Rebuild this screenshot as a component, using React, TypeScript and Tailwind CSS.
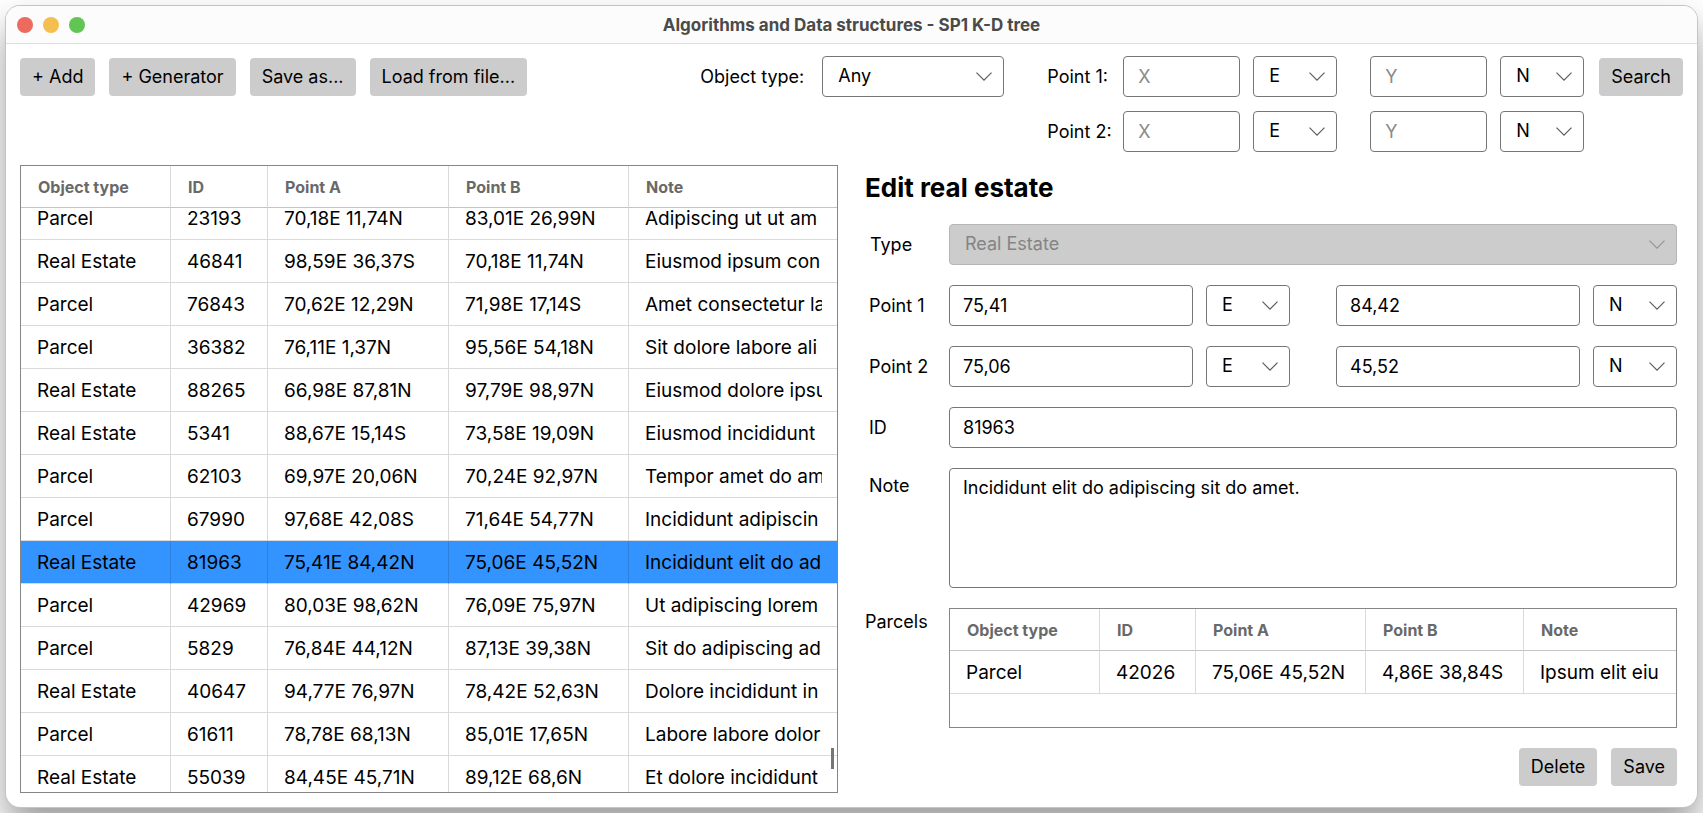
import { useLayoutEffect, useRef } from "react";
import type { ReactNode } from "react";

type Row = [type: string, id: string, a: string, b: string, note: string];

const ROWS: Row[] = [
  ["Parcel", "23193", "70,18E 11,74N", "83,01E 26,99N", "Adipiscing ut ut am"],
  ["Real Estate", "46841", "98,59E 36,37S", "70,18E 11,74N", "Eiusmod ipsum con"],
  ["Parcel", "76843", "70,62E 12,29N", "71,98E 17,14S", "Amet consectetur la"],
  ["Parcel", "36382", "76,11E 1,37N", "95,56E 54,18N", "Sit dolore labore ali"],
  ["Real Estate", "88265", "66,98E 87,81N", "97,79E 98,97N", "Eiusmod dolore ipsu"],
  ["Real Estate", "5341", "88,67E 15,14S", "73,58E 19,09N", "Eiusmod incididunt"],
  ["Parcel", "62103", "69,97E 20,06N", "70,24E 92,97N", "Tempor amet do am"],
  ["Parcel", "67990", "97,68E 42,08S", "71,64E 54,77N", "Incididunt adipiscin"],
  ["Real Estate", "81963", "75,41E 84,42N", "75,06E 45,52N", "Incididunt elit do ad"],
  ["Parcel", "42969", "80,03E 98,62N", "76,09E 75,97N", "Ut adipiscing lorem"],
  ["Parcel", "5829", "76,84E 44,12N", "87,13E 39,38N", "Sit do adipiscing ad"],
  ["Real Estate", "40647", "94,77E 76,97N", "78,42E 52,63N", "Dolore incididunt in"],
  ["Parcel", "61611", "78,78E 68,13N", "85,01E 17,65N", "Labore labore dolor"],
  ["Real Estate", "55039", "84,45E 45,71N", "89,12E 68,6N", "Et dolore incididunt"],
];

const PARCELS: Row[] = [["Parcel", "42026", "75,06E 45,52N", "4,86E 38,84S", "Ipsum elit eiu"]];

const HEADERS = ["Object type", "ID", "Point A", "Point B", "Note"];

function Button({ children }: { children: ReactNode }) {
  return (
    <button type="button" className="h-[38px] shrink-0 rounded-[4px] bg-[#cccccc] px-3 pb-px text-lg whitespace-nowrap">
      {children}
    </button>
  );
}

function Select({ label, id, value, options, disabled, className }: {
  label?: string;
  id?: string;
  value: string;
  options: string[];
  disabled?: boolean;
  className: string;
}) {
  return (
    <div className={`grid items-center ${className}`}>
      <select
        id={id}
        aria-label={label}
        defaultValue={value}
        disabled={disabled}
        className="col-start-1 row-start-1 h-[41px] w-full appearance-none rounded-[4px] border border-[#767676] bg-white pr-8 pb-[2px] pl-[15px] text-lg leading-6 text-black opacity-100 disabled:border-[#b5b5b5] disabled:bg-[#cccccc] disabled:text-[#848484]"
      >
        {options.map((o) => (
          <option key={o}>{o}</option>
        ))}
      </select>
      <svg
        viewBox="0 0 16 9"
        className={`pointer-events-none col-start-1 row-start-1 mr-3 h-[9px] w-4 justify-self-end fill-none ${disabled ? "stroke-[#949494]" : "stroke-[#5c5c5c]"}`}
        strokeWidth="1.2"
        aria-hidden="true"
      >
        <path d="M0.5 0.6L8 8.1L15.5 0.6" />
      </svg>
    </div>
  );
}

function Field({ label, id, value, placeholder, className }: {
  label?: string;
  id?: string;
  value?: string;
  placeholder?: string;
  className: string;
}) {
  return (
    <input
      type="text"
      id={id}
      aria-label={label}
      defaultValue={value}
      placeholder={placeholder}
      className={`h-[41px] min-w-0 rounded-[4px] border border-[#767676] bg-white pb-px text-lg leading-6 placeholder:text-[#8a8a8a] ${className}`}
    />
  );
}

function DataTable({ rows, widths, selected, offset = 0 }: {
  rows: Row[];
  widths: string[];
  selected?: string;
  offset?: number;
}) {
  const ref = useRef<HTMLDivElement>(null);
  useLayoutEffect(() => {
    if (ref.current) ref.current.scrollTop = offset;
  }, [offset]);
  return (
    <div ref={ref} className="h-full overflow-y-auto border border-[#868686] [scrollbar-width:none]">
      <table className="w-full table-fixed border-separate border-spacing-0 text-left">
        <colgroup>
          {widths.map((w, i) => (
            <col key={i} className={w} />
          ))}
        </colgroup>
        <thead>
          <tr>
            {HEADERS.map((h) => (
              <th
                key={h}
                className="sticky top-0 h-[42px] border-r border-b border-r-[#dadada] border-b-[#c4c4c4] bg-white px-[17px] text-base leading-5 font-bold text-[#696969] last:border-r-0"
              >
                {h}
              </th>
            ))}
          </tr>
        </thead>
        <tbody>
          {rows.map((r) => (
            <tr key={r[1]} aria-selected={r[1] === selected} className="group aria-selected:bg-[#3393ff]">
              {r.map((c, i) => (
                <td
                  key={i}
                  className="h-[43px] border-r border-b border-[#dadada] pt-px pr-[15px] pl-4 text-[19px] leading-6 group-aria-selected:border-r-[#2d80dd] last:border-r-0"
                >
                  <div className="overflow-hidden whitespace-nowrap">{c}</div>
                </td>
              ))}
            </tr>
          ))}
        </tbody>
      </table>
    </div>
  );
}

function SearchPoint({ n }: { n: number }) {
  return (
    <div className="flex items-center">
      <label htmlFor={`search-x${n}`} className="w-[76px] text-lg leading-6">Point {n}:</label>
      <Field id={`search-x${n}`} placeholder="X" className="w-[117px] px-[14px]" />
      <Select label={`Point ${n} longitude`} value="E" options={["E", "W"]} className="ml-[13px] w-[84px]" />
      <Field label={`Point ${n} Y`} placeholder="Y" className="ml-[33px] w-[117px] px-[14px]" />
      <Select label={`Point ${n} latitude`} value="N" options={["N", "S"]} className="ml-[13px] w-[84px]" />
    </div>
  );
}

function EditPoint({ n, x, y }: { n: number; x: string; y: string }) {
  return (
    <>
      <label htmlFor={`edit-x${n}`} className="self-center pl-1">Point {n}</label>
      <div className="flex">
        <Field id={`edit-x${n}`} value={x} className="flex-1 px-[13px]" />
        <Select label={`Point ${n} east or west`} value="E" options={["E", "W"]} className="ml-[13px] w-[84px]" />
        <Field label={`Point ${n} second coordinate`} value={y} className="ml-[46px] flex-1 px-[13px]" />
        <Select label={`Point ${n} north or south`} value="N" options={["N", "S"]} className="ml-[13px] w-[84px]" />
      </div>
    </>
  );
}

export default function App() {
  return (
    <div className="flex h-screen overflow-hidden bg-white p-[6px] font-['Inter',sans-serif] text-black">
      <div className="flex min-w-0 flex-1 flex-col overflow-hidden rounded-[14px] bg-white shadow-[0_0_0_1px_#c4c4c4,0_20px_36px_rgba(0,0,0,0.4)]">
        <header className="grid h-[38px] shrink-0 grid-cols-[1fr_auto_1fr] items-center border-b border-[#dedede] bg-[#fcfcfc]">
          <div className="flex gap-[10px] pl-[11px]">
            <button type="button" aria-label="Close" className="size-4 rounded-full bg-[#ec6a5e]" />
            <button type="button" aria-label="Minimize" className="size-4 rounded-full bg-[#f4bf4f]" />
            <button type="button" aria-label="Zoom" className="size-4 rounded-full bg-[#61c554]" />
          </div>
          <h1 className="text-[17px] leading-6 font-bold text-[#4a4a4a]">Algorithms and Data structures - SP1 K-D tree</h1>
        </header>

        <div className="flex shrink-0 items-start px-[14px] pt-3">
          <div className="flex gap-[14px] pt-[2px]">
            <Button>+ Add</Button>
            <Button>+ Generator</Button>
            <Button>Save as...</Button>
            <Button>Load from file...</Button>
          </div>
          <div className="ml-auto flex items-start">
            <div className="flex items-center gap-[18px]">
              <label htmlFor="search-type" className="text-lg leading-6">Object type:</label>
              <Select id="search-type" value="Any" options={["Any", "Parcel", "Real Estate"]} className="w-[182px]" />
            </div>
            <div className="ml-[43px] flex flex-col gap-[14px]">
              <SearchPoint n={1} />
              <SearchPoint n={2} />
            </div>
            <div className="ml-[15px] pt-[2px]">
              <Button>Search</Button>
            </div>
          </div>
        </div>

        <main className="grid min-h-0 flex-1 grid-cols-[minmax(0,818fr)_minmax(0,812fr)] gap-[27px] pt-[13px] pr-5 pb-[14px] pl-[14px]">
          <div className="relative min-h-0">
            <DataTable
              rows={ROWS}
              widths={["w-[150px]", "w-[97px]", "w-[181px]", "w-[180px]", "w-auto"]}
              selected="81963"
              offset={11}
            />
            <div className="absolute right-1 bottom-6 h-[21px] w-[3px] bg-[#767676]" />
          </div>

          <section className="flex min-h-0 flex-col">
            <h2 className="pt-[5px] text-[26px] leading-9 font-bold">Edit real estate</h2>
            <form className="mt-[18px] grid grid-cols-[84px_minmax(0,1fr)] gap-y-5 text-lg leading-6">
              <label htmlFor="edit-type" className="self-center pl-[5px]">Type</label>
              <Select id="edit-type" value="Real Estate" options={["Parcel", "Real Estate"]} disabled className="w-full" />
              <EditPoint n={1} x="75,41" y="84,42" />
              <EditPoint n={2} x="75,06" y="45,52" />
              <label htmlFor="edit-id" className="self-center pl-1">ID</label>
              <Field id="edit-id" value="81963" className="w-full px-[13px]" />
              <label htmlFor="edit-note" className="pt-[6px] pl-1">Note</label>
              <textarea
                id="edit-note"
                defaultValue="Incididunt elit do adipiscing sit do amet."
                className="h-[120px] w-full resize-none rounded-[4px] border border-[#767676] bg-white px-[13px] py-[7px]"
              />
              <span className="pt-[2px]">Parcels</span>
              <div className="h-[120px]">
                <DataTable
                  rows={PARCELS}
                  widths={["w-[150px]", "w-[96px]", "w-[170px]", "w-[158px]", "w-auto"]}
                />
              </div>
            </form>
            <div className="mt-5 flex justify-end gap-[14px]">
              <Button>Delete</Button>
              <Button>Save</Button>
            </div>
          </section>
        </main>
      </div>
    </div>
  );
}
